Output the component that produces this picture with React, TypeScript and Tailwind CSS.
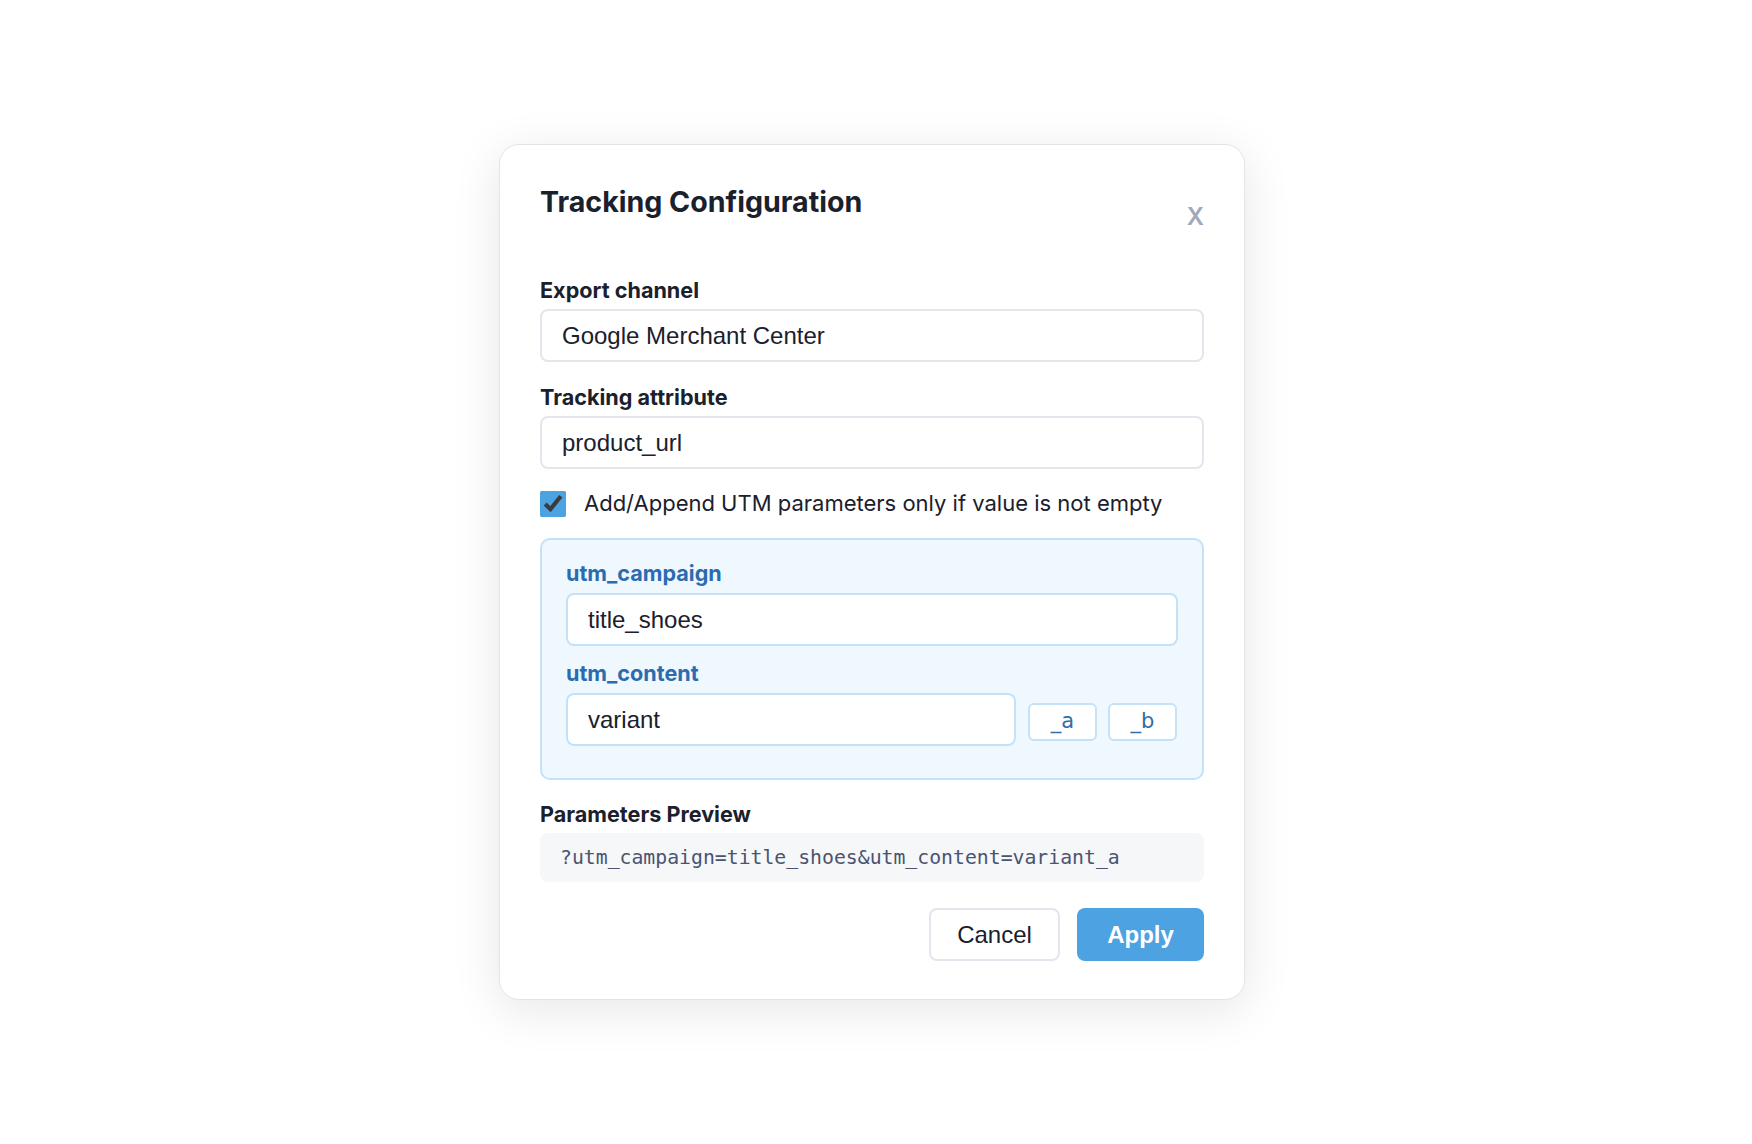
import { useState } from 'react';

const sans = { fontFamily: 'Inter, "Noto Sans", sans-serif' };

function Field({ label, value }: { label: string; value: string }) {
  return (
    <div>
      <label className="block text-[21.6px] leading-[24px] font-bold text-[#1a202c] mb-[7px]">
        {label}
      </label>
      <input
        defaultValue={value}
        className="w-full h-[53px] px-5 rounded-[8px] border-2 border-[#e4e6ed] bg-white text-[24px] text-[#1a202c] outline-none font-['Liberation_Sans',Arial,sans-serif]"
      />
    </div>
  );
}

export default function App() {
  const [onlyIfNotEmpty, setOnlyIfNotEmpty] = useState(true);
  const [campaign, setCampaign] = useState('title_shoes');
  const [content, setContent] = useState('variant');
  const [suffix, setSuffix] = useState('_a');

  const preview = `?utm_campaign=${campaign}&utm_content=${content}${suffix}`;

  return (
    <div className="w-full h-[1144px] bg-white flex items-center justify-center pr-[8px]" style={sans}>
      <div className="w-[746px] bg-white border border-[#e3e4ea] rounded-[20px] px-10 pt-10 pb-[38px] shadow-[0_10px_48px_rgba(15,23,42,0.10)]">
        {/* header */}
        <div className="h-[34px] flex justify-between items-start">
          <h2 className="text-[28.6px] leading-[34px] font-bold text-[#1a202c]">Tracking Configuration</h2>
          <button className="mt-[17px] text-[24px] leading-[29px] font-semibold text-[#a0a8bc]">X</button>
        </div>

        <div className="mt-[59px]">
          <Field label="Export channel" value="Google Merchant Center" />
        </div>
        <div className="mt-[23px]">
          <Field label="Tracking attribute" value="product_url" />
        </div>

        <label className="mt-[21px] h-[27px] flex items-center gap-[18px] cursor-pointer">
          <input
            type="checkbox"
            checked={onlyIfNotEmpty}
            onChange={(e) => setOnlyIfNotEmpty(e.target.checked)}
            className="w-[26px] h-[26px] m-0 accent-[#4da3e2]"
          />
          <span className="text-[22px] leading-[27px] text-[#1a202c]">
            Add/Append UTM parameters only if value is not empty
          </span>
        </label>

        {/* utm box */}
        <div className="mt-[21px] rounded-[10px] border-2 border-[#c3e2f8] bg-[#f0f8ff] px-6 pt-[21px] pb-[32px]">
          <div className="text-[21.6px] leading-[24px] font-bold text-[#2b6cb0]">utm_campaign</div>
          <input
            value={campaign}
            onChange={(e) => setCampaign(e.target.value)}
            className="mt-[8px] w-full h-[53px] px-5 rounded-[8px] border-2 border-[#c3e2f8] bg-white text-[24px] text-[#1a202c] outline-none font-['Liberation_Sans',Arial,sans-serif]"
          />
          <div className="mt-[15px] text-[21.6px] leading-[24px] font-bold text-[#2b6cb0]">utm_content</div>
          <div className="mt-[8px] flex items-center">
            <input
              value={content}
              onChange={(e) => setContent(e.target.value)}
              className="w-[450px] h-[53px] px-5 rounded-[8px] border-2 border-[#c3e2f8] bg-white text-[24px] text-[#1a202c] outline-none font-['Liberation_Sans',Arial,sans-serif]"
            />
            <div className="ml-[12px] mt-[5px] flex gap-[11px]">
              {['_a', '_b'].map((s) => (
                <button
                  key={s}
                  onClick={() => setSuffix(s)}
                  className="w-[69px] h-[38px] rounded-[6px] border-2 border-[#c3e2f8] bg-white text-[21px] text-[#2f6ea8] font-['DejaVu_Sans',sans-serif]"
                >
                  {s}
                </button>
              ))}
            </div>
          </div>
        </div>

        <div className="mt-[22px] text-[21.6px] leading-[24px] font-bold text-[#1a202c]">Parameters Preview</div>
        <div className="mt-[7px] h-[49px] rounded-[8px] bg-[#f6f7f9] px-5 flex items-center text-[19.8px] text-[#4a5470] font-['DejaVu_Sans_Mono',monospace]">
          {preview}
        </div>

        <div className="mt-[26px] flex justify-end gap-[17px] font-['Liberation_Sans',Arial,sans-serif]">
          <button className="w-[131px] h-[53px] rounded-[8px] border-2 border-[#e4e6ed] bg-white text-[24px] text-[#1a202c]">
            Cancel
          </button>
          <button className="w-[127px] h-[53px] rounded-[8px] bg-[#4da3e2] text-[24px] font-bold text-white">
            Apply
          </button>
        </div>
      </div>
    </div>
  );
}
